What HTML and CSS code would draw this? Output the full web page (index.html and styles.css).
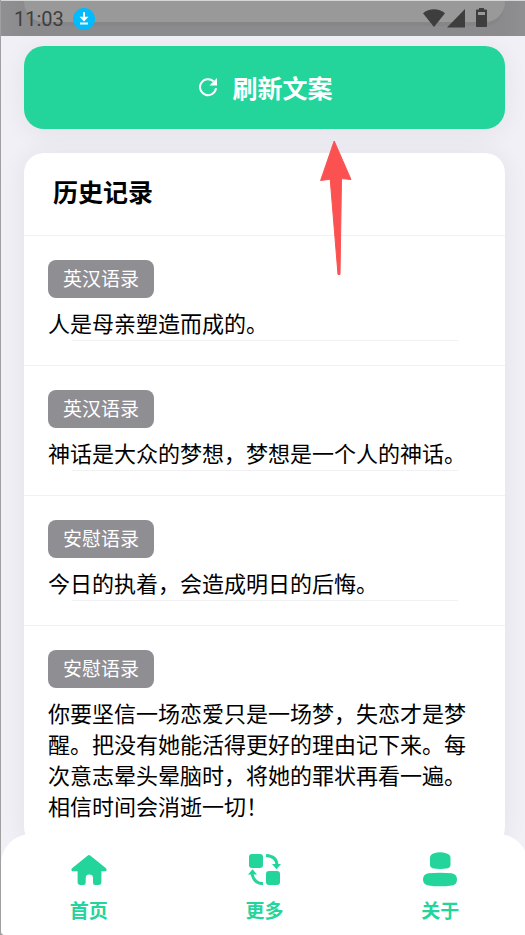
FILE: index.html
```html
<!DOCTYPE html>
<html lang="zh-CN">
<head>
<meta charset="utf-8">
<meta name="viewport" content="width=device-width, initial-scale=1">
<title>文案</title>
<link rel="stylesheet" href="styles.css">
</head>
<body>
<div class="app">
  <header class="status">
    <div class="status-card"></div>
    <div class="status-row">
      <span class="clock">11:03</span>
      <svg class="download" viewBox="0 0 22 22" aria-hidden="true">
        <circle cx="11" cy="11" r="11" fill="#00bbfd"/>
        <path d="M11 4.200v8" fill="none" stroke="#fff" stroke-width="2"/>
        <path d="M6.500 8.800h9L11 13.500z" fill="#fff"/>
        <path d="M7 15.500h8" fill="none" stroke="#fff" stroke-width="2"/>
      </svg>
      <svg class="signals" viewBox="0 0 65 20" aria-hidden="true" fill="#3e3e3e">
        <path d="M0 5.200C6-.2 16-.2 22 5.200L11 19z"/>
        <path d="M24 19.500L42 1v18.500z"/>
        <path fill-rule="evenodd" d="M56 0h5v1.500h2c.7 0 1 .3 1 1V18c0 .7-.3 1-1 1h-9c-.7 0-1-.3-1-1V2.500c0-.7.3-1 1-1h2zM55 4v3h7V4z"/>
      </svg>
    </div>
  </header>

  <main class="content">
    <button class="refresh" type="button">
      <svg class="refresh-icon" viewBox="0 0 20 20" aria-hidden="true">
        <path d="M18 11.200A8 8 0 1 1 15.500 4.300" fill="none" stroke="#fff" stroke-width="2"/>
        <path d="M19 1v7.500h-7.500z" fill="#fff"/>
      </svg>
      <span>刷新文案</span>
    </button>

    <section class="card">
      <h2 class="title">历史记录</h2>
      <article class="item">
        <span class="tag">英汉语录</span>
        <p class="quote">人是母亲塑造而成的。</p>
        <hr class="rule">
      </article>
      <article class="item">
        <span class="tag">英汉语录</span>
        <p class="quote">神话是大众的梦想，梦想是一个人的神话。</p>
        <hr class="rule">
      </article>
      <article class="item">
        <span class="tag">安慰语录</span>
        <p class="quote">今日的执着，会造成明日的后悔。</p>
        <hr class="rule">
      </article>
      <article class="item">
        <span class="tag">安慰语录</span>
        <p class="quote">你要坚信一场恋爱只是一场梦，失恋才是梦醒。把没有她能活得更好的理由记下来。每次意志晕头晕脑时，将她的罪状再看一遍。相信时间会消逝一切！</p>
      </article>
    </section>
  </main>

  <svg class="pointer" viewBox="0 0 32 136" aria-hidden="true">
    <path d="M14.200 1L31 39.500 21.500 38.600 20 134.500H18L10.200 39.200.6 40.500z" fill="#fb5251" stroke="#fb5251" stroke-linejoin="round"/>
  </svg>

  <nav class="tabs">
    <a class="tab" href="#home">
      <svg class="tab-icon" viewBox="0 0 36 36" aria-hidden="true" fill="currentColor">
        <path d="M16.500 3.700q1.500-1.200 3 0L35 16.300q1.200 1.400 0 3h-4.600V30q0 3-3 3h-3.200q-2.200 0-2.200-2.200V26q0-3.400-3.600-3.400T14.700 26v4.800q0 2.200-2.200 2.200H9.600q-3 0-3-3V19.300H1q-1.200-1.600 0-3z"/>
      </svg>
      <span>首页</span>
    </a>
    <a class="tab" href="#more">
      <svg class="tab-icon" viewBox="0 0 36 36" aria-hidden="true" fill="currentColor">
        <rect x="2" y="2" width="14" height="14" rx="3"/>
        <rect x="19" y="19" width="14" height="14" rx="3"/>
        <path d="M19 3.500Q29.500 4 30 13" fill="none" stroke="currentColor" stroke-width="3"/>
        <path d="M25 12h9l-4.500 5.200zM1 22.500h9l-4.500-5.200z"/>
        <path d="M5 22Q7.500 32 16 31.500" fill="none" stroke="currentColor" stroke-width="3"/>
      </svg>
      <span>更多</span>
    </a>
    <a class="tab" href="#about">
      <svg class="tab-icon" viewBox="0 0 36 36" aria-hidden="true" fill="currentColor">
        <path d="M8 6Q8 2.500 12 1.300 18-.8 24 1.300 28.500 2.500 28.500 6v7q0 2.500-2.500 3.300-8 1.400-15.500 0Q8 15.500 8 13z"/>
        <path d="M1 27.500Q1 22 6.500 21.300q11.500-1.300 23 0Q35 22 35 27.500t-5.500 6q-11.500 1.700-23 0Q1 32.500 1 27.500z"/>
      </svg>
      <span>关于</span>
    </a>
  </nav>
</div>
</body>
</html>
```

FILE: styles.css
```css
* {
  box-sizing: border-box;
}

html {
  height: 100%;
  overflow: hidden;
}

body {
  height: 100%;
  margin: 0;
  overflow: hidden;
  background: #a0a0a2;
  font-family: "Noto Sans CJK SC", sans-serif;
  color: #000;
}

.app {
  position: relative;
  display: flex;
  flex-direction: column;
  height: 100%;
  margin: 0 -3px 0 1px;
  overflow: hidden;
  background: #f1f0f6;
  border-radius: 0 0 0 4px;
}

.status {
  position: relative;
  z-index: 1;
  flex: none;
  display: grid;
  height: 36px;
  padding: 0 23px;
  border-top: 1px solid #d5d7d6;
  background: linear-gradient(90deg, #909092, #8b8b8d 24px, #8b8b8d calc(100% - 24px), #909092);
}

.status-card {
  grid-area: 1 / 1;
  height: 21px;
  border-radius: 0 0 20px 20px;
  background: #999;
  box-shadow: 0 5px 0 -1px #868688;
}

.status-row {
  grid-area: 1 / 1;
  position: relative;
  display: flex;
  align-items: center;
  margin: 0 17px 0 -10px;
}

.clock {
  padding-top: 1px;
  font: 20px/24px Roboto, sans-serif;
  color: #3e3e3e;
}

.download {
  width: 22px;
  height: 22px;
  margin-left: 9px;
}

.signals {
  width: 65px;
  height: 20px;
  margin: 0 0 2px auto;
}

.content {
  flex: 1;
  min-height: 0;
  display: flex;
  flex-direction: column;
  gap: 24px;
  padding: 10px 23px 0;
}

.refresh {
  flex: none;
  display: flex;
  align-items: center;
  justify-content: center;
  gap: 14px;
  min-height: 83px;
  padding: 0 0 2px 2px;
  border: 0;
  border-radius: 20px;
  background: #23d59b;
  box-shadow: 0 4px 24px rgba(40, 40, 60, 0.07);
  color: #fff;
  font: bold 25px/36px "Noto Sans CJK SC", sans-serif;
}

.refresh-icon {
  width: 20px;
  height: 20px;
}

.card {
  flex: none;
  border-radius: 20px;
  background: #fff;
  box-shadow: 0 0 24px rgba(40, 40, 60, 0.07);
}

.title {
  margin: 0;
  padding: 20px 29px 26px;
  font-size: 25px;
  line-height: 36px;
  font-weight: bold;
}

.item {
  padding: 24px;
  border-top: 1px solid #f1f1f5;
}

.tag {
  display: block;
  width: fit-content;
  padding: 4px 15px 6px;
  border-radius: 8px;
  background: #8f8e93;
  color: #fff;
  font-size: 19px;
  line-height: 28px;
}

.quote {
  margin: 9px 0 0;
  padding-bottom: 2px;
  font-size: 22px;
  line-height: 31px;
}

.rule {
  height: 1px;
  margin: 0 23px 0 24px;
  border: 0;
  background: #f1f1f3;
}

.pointer {
  position: absolute;
  top: 140px;
  left: 319px;
  width: 32px;
  height: 136px;
}

.tabs {
  position: absolute;
  right: 0;
  bottom: 0;
  left: 0;
  display: flex;
  height: 101px;
  padding-top: 18px;
  border-radius: 30px 30px 0 4px;
  background: #fff;
}

.tab {
  flex: 1;
  display: flex;
  flex-direction: column;
  align-items: center;
  gap: 8px;
  color: #23d59b;
  font-size: 19px;
  line-height: 28px;
  font-weight: bold;
  text-decoration: none;
}

.tab-icon {
  width: 36px;
  height: 36px;
}
```
